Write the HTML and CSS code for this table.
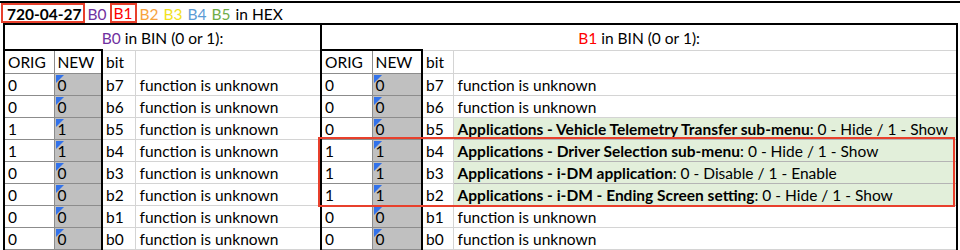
FILE: index.html
```html
<!DOCTYPE html>
<html>
<head>
<meta charset="utf-8">
<link rel="stylesheet" href="styles.css">
</head>
<body>
<div class="sheet">
  <div class="title-row">
    <span class="boxed key">720-04-27</span>
    <span class="c-b0">B0</span>
    <span class="boxed small c-b1">B1</span>
    <span class="c-b2">B2</span>
    <span class="c-b3 wide">B3</span>
    <span class="c-b4 wide">B4</span>
    <span class="c-b5 wide">B5</span>
    <span class="wide">in HEX</span>
  </div>
  <div class="grid-wrap">
    <table class="grid">
      <colgroup>
        <col class="w-orig-l"><col class="w-new-l"><col class="w-bit-l"><col class="w-desc-l">
        <col class="w-orig-r"><col class="w-new-r"><col class="w-bit-r"><col class="w-desc-r">
      </colgroup>
      <tr class="title2">
        <td colspan="4" class="half-l"><span class="c-b0">B0</span> in BIN (0 or 1):</td>
        <td colspan="4" class="half-r"><span class="c-b1">B1</span> in BIN (0 or 1):</td>
      </tr>
      <tr class="colhead">
        <td class="orig">ORIG</td><td class="new plain">NEW</td><td class="bit">bit</td><td class="desc"></td>
        <td class="orig">ORIG</td><td class="new plain">NEW</td><td class="bit">bit</td><td class="desc last"></td>
      </tr>
      <tr>
        <td class="orig">0</td><td class="new">0</td><td class="bit">b7</td><td class="desc">function is unknown</td>
        <td class="orig">0</td><td class="new">0</td><td class="bit">b7</td><td class="desc last">function is unknown</td>
      </tr>
      <tr>
        <td class="orig">0</td><td class="new">0</td><td class="bit">b6</td><td class="desc">function is unknown</td>
        <td class="orig">0</td><td class="new">0</td><td class="bit">b6</td><td class="desc last">function is unknown</td>
      </tr>
      <tr>
        <td class="orig">1</td><td class="new">1</td><td class="bit">b5</td><td class="desc">function is unknown</td>
        <td class="orig">0</td><td class="new">0</td><td class="bit">b5</td><td class="desc last green"><b>Applications - Vehicle Telemetry Transfer sub-menu</b>: 0 - Hide / 1 - Show</td>
      </tr>
      <tr>
        <td class="orig">1</td><td class="new">1</td><td class="bit">b4</td><td class="desc">function is unknown</td>
        <td class="orig">1</td><td class="new">1</td><td class="bit">b4</td><td class="desc last green"><b>Applications - Driver Selection sub-menu</b>: 0 - Hide / 1 - Show</td>
      </tr>
      <tr>
        <td class="orig">0</td><td class="new">0</td><td class="bit">b3</td><td class="desc">function is unknown</td>
        <td class="orig">1</td><td class="new">1</td><td class="bit">b3</td><td class="desc last green"><b>Applications - i-DM application</b>: 0 - Disable / 1 - Enable</td>
      </tr>
      <tr>
        <td class="orig">0</td><td class="new">0</td><td class="bit">b2</td><td class="desc">function is unknown</td>
        <td class="orig">1</td><td class="new">1</td><td class="bit">b2</td><td class="desc last green"><b>Applications - i-DM - Ending Screen setting</b>: 0 - Hide / 1 - Show</td>
      </tr>
      <tr>
        <td class="orig">0</td><td class="new">0</td><td class="bit">b1</td><td class="desc">function is unknown</td>
        <td class="orig">0</td><td class="new">0</td><td class="bit">b1</td><td class="desc last">function is unknown</td>
      </tr>
      <tr>
        <td class="orig">0</td><td class="new">0</td><td class="bit">b0</td><td class="desc">function is unknown</td>
        <td class="orig">0</td><td class="new">0</td><td class="bit">b0</td><td class="desc last">function is unknown</td>
      </tr>
    </table>
    <div class="highlight"></div>
  </div>
</div>
</body>
</html>
```
FILE: styles.css
```css
* { box-sizing: border-box; }
html, body { margin: 0; padding: 0; background: #fff; }
body {
  font-family: Lato, "Open Sans", "Liberation Sans", sans-serif;
  font-size: 15.5px;
  color: #000;
}
.sheet {
  width: 960px;
  height: 250px;
  overflow: hidden;
  padding-top: 1px;
}
.title-row {
  border-top: 2px solid #000;
  height: 22px;
  display: flex;
  align-items: stretch;
  gap: 3px;
  padding-left: 1px;
  line-height: 18px;
  white-space: nowrap;
}
.title-row > span { display: flex; align-items: center; padding-top: 1px; }
.title-row > .wide { margin-left: 2px; }
.boxed {
  border: 2px solid #e8402c;
  padding: 0 1px 0 4px;
}
.boxed.small { padding: 0 2px; }
.key { font-weight: bold; }
.c-b0 { color: #7030a0; }
.c-b1 { color: #ff0000; }
.c-b2 { color: #f7a33c; }
.c-b3 { color: #f2e21c; }
.c-b4 { color: #5b9bd5; }
.c-b5 { color: #70ad47; }

.grid-wrap { position: relative; }
.grid {
  border-collapse: collapse;
  table-layout: fixed;
  width: 954px;
  margin-left: 3px;
}
.w-orig-l { width: 50px; }
.w-new-l { width: 48px; }
.w-bit-l { width: 33px; }
.w-desc-l { width: 186px; }
.w-orig-r { width: 51px; }
.w-new-r { width: 50px; }
.w-bit-r { width: 31px; }
.w-desc-r { width: 504px; }

.grid td {
  border: 1px solid #d4d4d4;
  height: 22px;
  padding: 1px 3px 0;
  white-space: nowrap;
  overflow: hidden;
  line-height: 20px;
}
.title2 td {
  border-top: 2px solid #000;
  text-align: center;
  height: 26px;
}
.colhead td { height: 23px; }
.title2 .half-l { border-left: 2px solid #000; border-right: 2px solid #000; }
.title2 .half-r { border-right: 2px solid #000; }

.grid td.orig {
  border-left: 2px solid #000;
  border-right: 1px solid #8c8c8c;
  border-top: 1px solid #8c8c8c;
  border-bottom: 1px solid #8c8c8c;
}
.grid td.new {
  border-right: 2px solid #000;
  border-left: 1px solid #8c8c8c;
  border-top: 1px solid #8c8c8c;
  border-bottom: 1px solid #8c8c8c;
  background: #c0c0c0;
  position: relative;
}
.grid td.new.plain { background: #fff; }
.grid td.new:not(.plain)::before {
  content: "";
  position: absolute;
  left: 1px;
  top: 1px;
  width: 9px;
  height: 9px;
  background: #3272ea;
  clip-path: polygon(0 0, 100% 0, 0 100%);
}
.colhead td.orig, .colhead td.new { border-top: 2px solid #000; }
.grid td.desc { padding-left: 4px; }
.grid td.last { border-right: 2px solid #000; }
.grid td.green { background: #e2efda; border-top-color: #b4b4b4; border-bottom-color: #b4b4b4; }

.highlight {
  position: absolute;
  left: 318px;
  top: 114px;
  width: 637px;
  height: 70px;
  border: 2px solid #e8402c;
  pointer-events: none;
}
```
